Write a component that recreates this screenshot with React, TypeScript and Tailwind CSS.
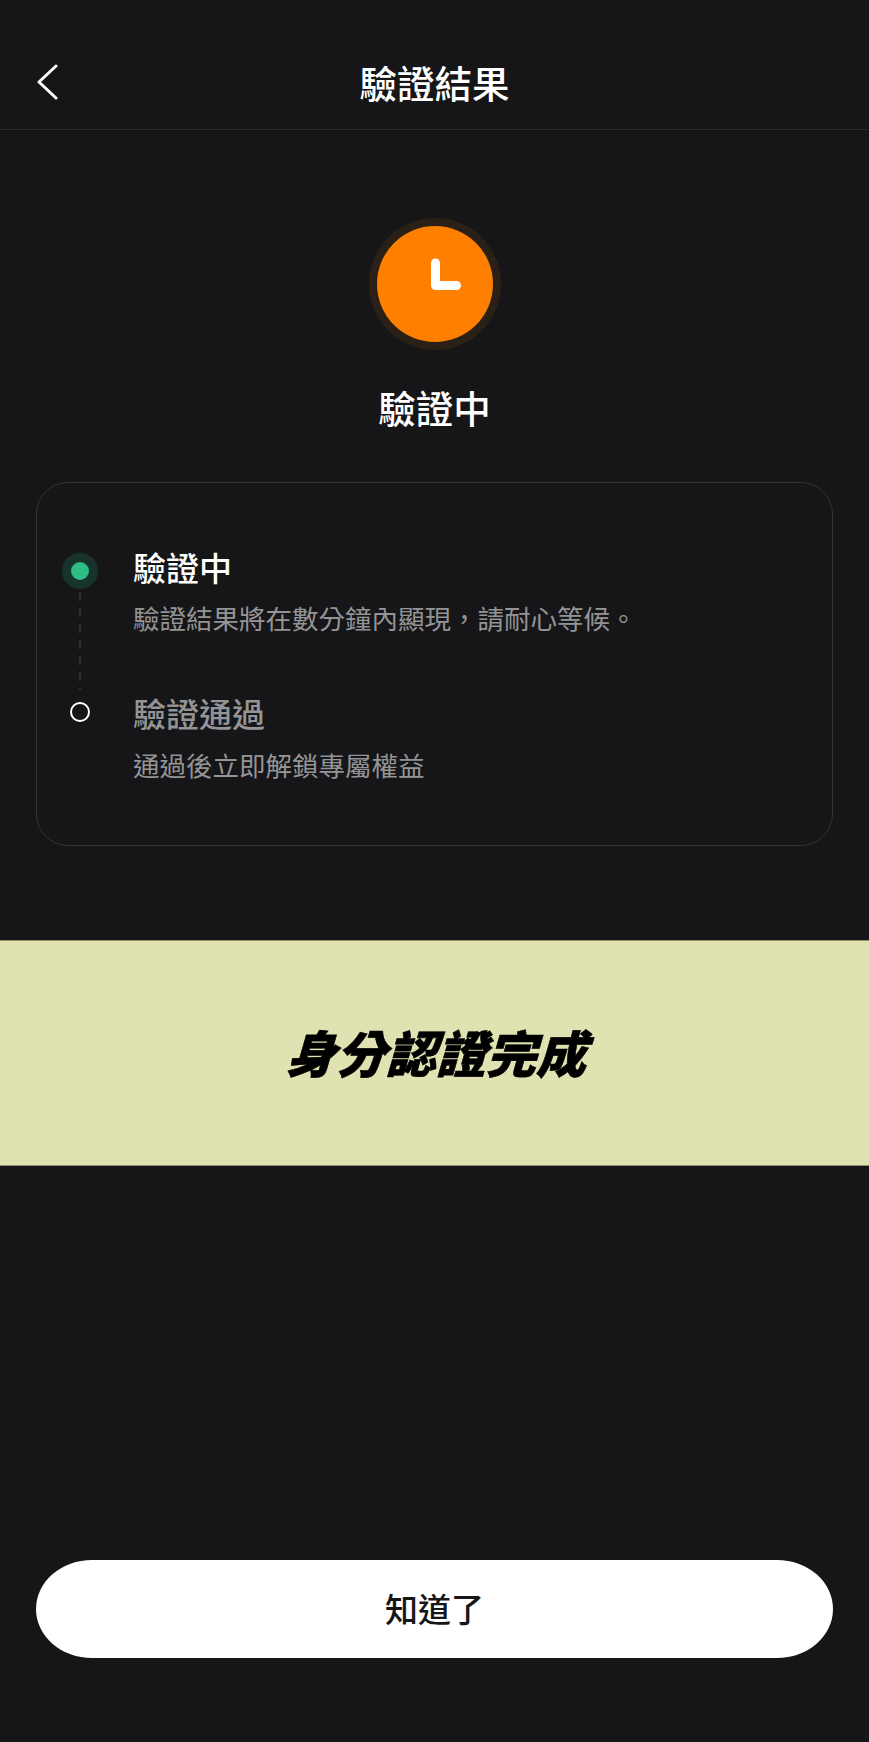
export default function App() {
  return (
    <div className="flex h-[1742px] w-full flex-col bg-[#161618] font-['Noto_Sans_CJK_TC','Noto_Sans',sans-serif] text-white">
      <header className="grid h-[130px] grid-cols-[1fr_auto_1fr] items-center border-b border-[#2a2a2c] pr-[35px] pl-[35px] pt-[34px]">
        <svg width="24" height="36" viewBox="0 0 24 36" fill="none">
          <path d="M21 2 L4 18 L21 34" stroke="white" strokeWidth="3" strokeLinecap="round" strokeLinejoin="round" />
        </svg>
        <h1 className="text-[37.5px] leading-[48px] font-medium">驗證結果</h1>
        <div />
      </header>

      <section className="flex flex-col items-center pt-[88px]">
        <div className="flex h-[132px] w-[132px] items-center justify-center rounded-full bg-[#2a2016]">
          <div className="h-[116px] w-[116px] rounded-full bg-[#ff8000]">
            <svg width="116" height="116" viewBox="0 0 116 116" fill="none">
              <path d="M58.5 37 V59.5 H79.5" stroke="white" strokeWidth="9" strokeLinecap="round" strokeLinejoin="round" />
            </svg>
          </div>
        </div>
        <h2 className="mt-[32px] text-[37.5px] leading-[50px] font-medium">驗證中</h2>
      </section>

      <section className="mx-[36px] mt-[50px] box-border h-[364px] rounded-[32px] border-[1.5px] border-[#333335] pt-[62px] pl-[25px]">
        <div className="flex gap-[35px]">
          <div className="flex w-[36px] flex-col items-center pt-[8px]">
            <div className="flex h-[36px] w-[36px] items-center justify-center rounded-full bg-[#17332b]">
              <div className="h-[18px] w-[18px] rounded-full bg-[#2dbd85]" />
            </div>
            <div className="mt-[3px] h-[98px] w-px -translate-x-[0.5px] bg-[repeating-linear-gradient(to_bottom,#47474a_0px,#47474a_9px,transparent_9px,transparent_16px)]" />
            <div className="mt-[12px] h-[20px] w-[20px] rounded-full border-2 border-white" />
          </div>
          <div className="flex flex-col">
            <div className="text-[33px] leading-[44px] font-medium">驗證中</div>
            <div className="mt-[9px] text-[26.5px] leading-[40px] text-[#949496]">驗證結果將在數分鐘內顯現，請耐心等候。</div>
            <div className="mt-[53px] text-[33px] leading-[44px] font-medium text-[#949496]">驗證通過</div>
            <div className="mt-[10px] text-[26.5px] leading-[40px] text-[#949496]">通過後立即解鎖專屬權益</div>
          </div>
        </div>
      </section>

      <section className="mt-[94px] flex h-[226px] items-center justify-center border-y border-[#8f9072] bg-[#e0e2b2] pl-[15px]">
        <div className="-mt-[5px] -skew-x-[16deg] text-[50px] leading-[60px] font-black text-black [-webkit-text-stroke:0.6px_black]">身分認證完成</div>
      </section>

      <div className="mt-auto px-[36px] pb-[84px]">
        <button className="flex h-[98px] w-full items-center justify-center rounded-[56px/49px] bg-white text-[33px] font-medium text-[#161618]">
          知道了
        </button>
      </div>
    </div>
  );
}
